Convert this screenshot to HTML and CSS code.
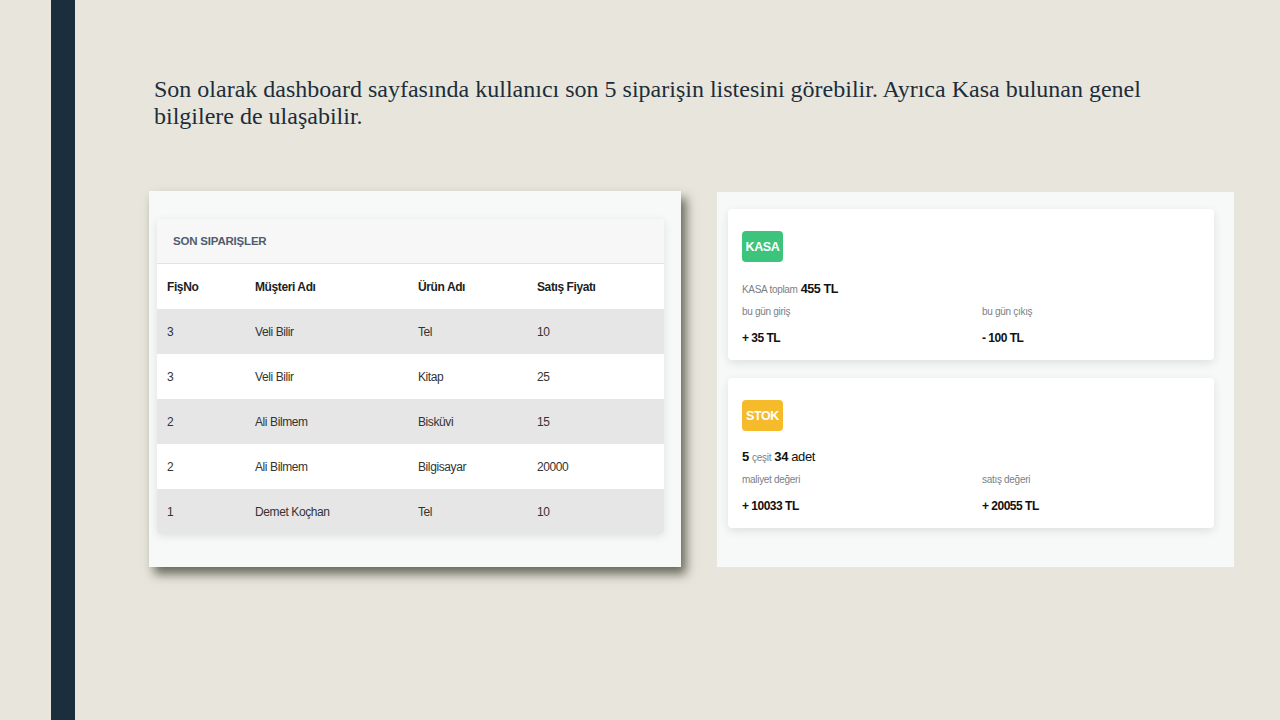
FILE: index.html
```html
<!DOCTYPE html>
<html lang="tr">
<head>
<meta charset="utf-8">
<link rel="stylesheet" href="styles.css">
</head>
<body>
<div class="slide">
  <div class="bar"></div>
  <div class="main">
    <p class="lead">Son olarak dashboard sayfasında kullanıcı son 5 siparişin listesini görebilir. Ayrıca Kasa bulunan genel bilgilere de ulaşabilir.</p>
    <div class="shots">
      <div class="shot shot-left">
        <div class="orders">
          <div class="orders-head">SON SIPARIŞLER</div>
          <table class="tbl">
            <thead>
              <tr><th class="c1">FişNo</th><th class="c2">Müşteri Adı</th><th class="c3">Ürün Adı</th><th>Satış Fiyatı</th></tr>
            </thead>
            <tbody>
              <tr class="alt"><td>3</td><td>Veli Bilir</td><td>Tel</td><td>10</td></tr>
              <tr><td>3</td><td>Veli Bilir</td><td>Kitap</td><td>25</td></tr>
              <tr class="alt"><td>2</td><td>Ali Bilmem</td><td>Bisküvi</td><td>15</td></tr>
              <tr><td>2</td><td>Ali Bilmem</td><td>Bilgisayar</td><td>20000</td></tr>
              <tr class="alt"><td>1</td><td>Demet Koçhan</td><td>Tel</td><td>10</td></tr>
            </tbody>
          </table>
        </div>
      </div>
      <div class="shot shot-right">
        <div class="info">
          <span class="badge green">KASA</span>
          <div class="total"><span class="muted">KASA toplam</span> <b>455 TL</b></div>
          <div class="pair">
            <div class="col"><div class="muted">bu gün giriş</div><div class="val">+ 35 TL</div></div>
            <div class="col"><div class="muted">bu gün çıkış</div><div class="val">- 100 TL</div></div>
          </div>
        </div>
        <div class="info">
          <span class="badge yellow">STOK</span>
          <div class="total"><b>5</b> <span class="muted">çeşit</span> <b>34</b> adet</div>
          <div class="pair">
            <div class="col"><div class="muted">maliyet değeri</div><div class="val">+ 10033 TL</div></div>
            <div class="col"><div class="muted">satış değeri</div><div class="val">+ 20055 TL</div></div>
          </div>
        </div>
      </div>
    </div>
  </div>
</div>
</body>
</html>
```
FILE: styles.css
```css
* { box-sizing: border-box; }
html, body { margin: 0; padding: 0; }
body {
  width: 1280px;
  height: 720px;
  overflow: hidden;
  background: #e8e6dc;
}
.slide {
  display: flex;
  height: 720px;
}
.bar {
  width: 24px;
  margin-left: 51px;
  background: #1b2e3e;
  flex: none;
}
.main {
  flex: 1;
  padding-left: 74px;
}
.lead {
  margin: 76px 0 0 5px;
  width: 1010px;
  font-family: "Liberation Serif", serif;
  font-size: 24px;
  line-height: 27px;
  color: #1d2d3b;
}
.shots {
  display: flex;
  gap: 36px;
  margin-top: 61px;
  align-items: flex-start;
}
.shot {
  background: #f7f8f8;
  font-family: "Liberation Sans", Arial, sans-serif;
}
.shot-left {
  width: 532px;
  height: 376px;
  padding: 28px 17px 0 8px;
  box-shadow: 5px 7px 10px rgba(60, 60, 45, 0.75);
}
.orders {
  background: #fff;
  border-radius: 4px;
  box-shadow: 0 2px 8px rgba(0,0,0,0.10);
  overflow: hidden;
}
.orders-head {
  height: 45px;
  background: #f7f7f7;
  border-bottom: 1px solid #e3e3e3;
  padding-left: 16px;
  display: flex;
  align-items: center;
  font-size: 11.5px;
  font-weight: bold;
  color: #4f5d6d;
  letter-spacing: -0.2px;
}
.tbl {
  width: 100%;
  border-collapse: collapse;
  font-size: 12px;
  letter-spacing: -0.4px;
  color: #333;
}
.tbl th, .tbl td {
  height: 45px;
  padding: 0 0 0 10px;
  text-align: left;
}
.tbl th { font-weight: bold; color: #1e1e1e; }
.tbl .c1 { width: 88px; }
.tbl .c2 { width: 163px; }
.tbl .c3 { width: 119px; }
.tbl tr.alt { background: #e6e6e6; }
.shot-right {
  width: 517px;
  height: 375px;
  margin-top: 1px;
  padding: 17px 20px 0 11px;
  display: flex;
  flex-direction: column;
  gap: 18px;
}
.info {
  background: #fff;
  border-radius: 4px;
  box-shadow: 0 3px 10px rgba(0,0,0,0.10);
  height: 151px;
  padding: 22px 14px 0;
}
.info + .info { height: 150px; }
.badge {
  display: inline-flex;
  align-items: center;
  justify-content: center;
  width: 41px;
  height: 31px;
  border-radius: 4px;
  color: #fff;
  font-weight: bold;
  font-size: 12.5px;
  letter-spacing: -0.4px;
}
.green { background: #3cc47c; }
.yellow { background: #f6bb2a; }
.total {
  margin-top: 19px;
  font-size: 12.5px;
  letter-spacing: -0.4px;
  color: #111;
  line-height: 16px;
}
.total .muted { font-size: 10px; }
.info + .info .total { margin-top: 18px; font-size: 13px; }
.muted {
  color: #7a7f86;
  font-size: 10px;
  letter-spacing: -0.3px;
}
.pair {
  display: flex;
  margin-top: 8px;
}
.col { width: 240px; flex: none; }
.val {
  margin-top: 14px;
  font-weight: bold;
  font-size: 12px;
  letter-spacing: -0.5px;
  color: #111;
}
```
